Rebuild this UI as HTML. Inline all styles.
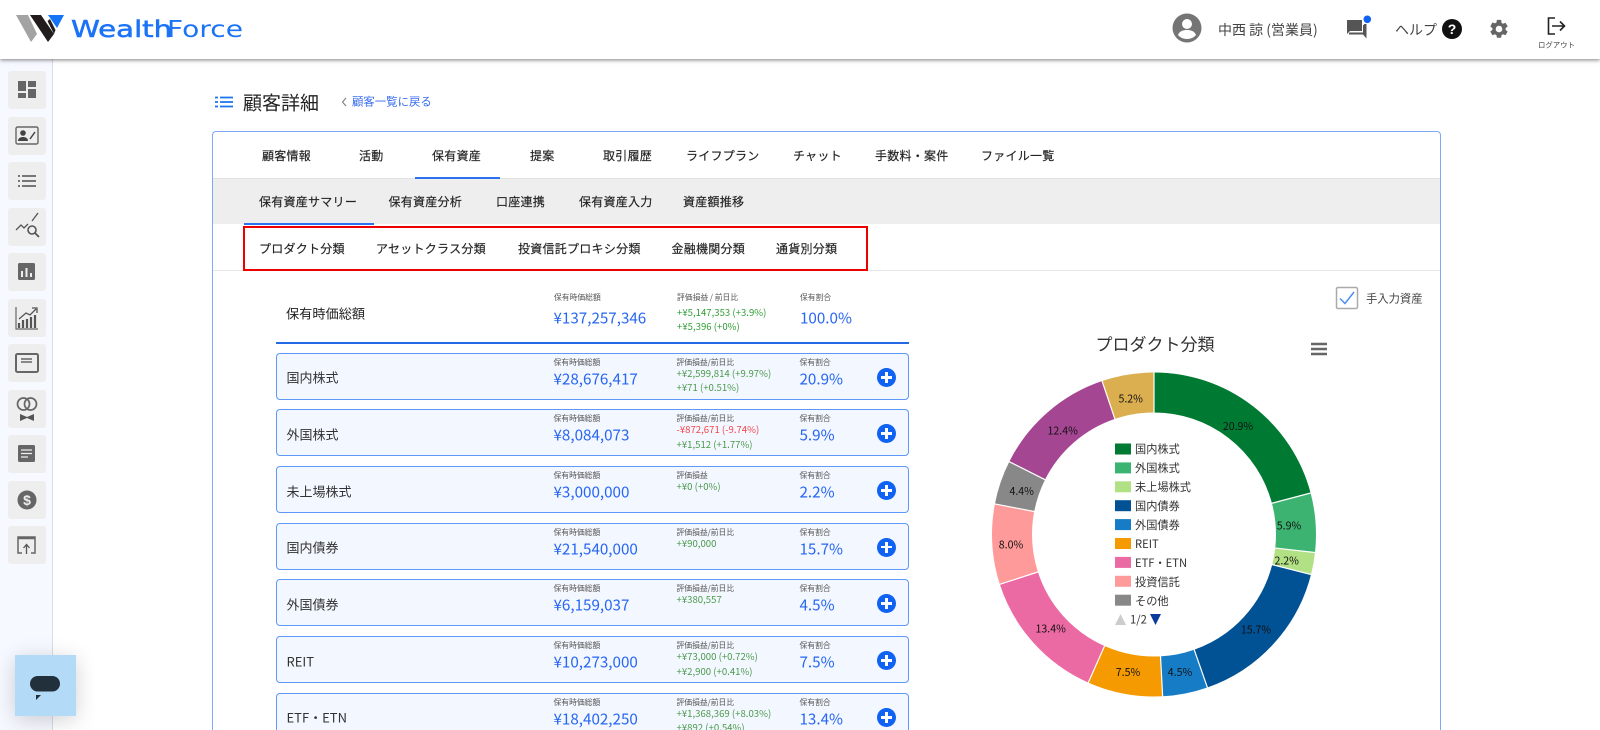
<!DOCTYPE html>
<html lang="ja"><head><meta charset="utf-8"><title>顧客詳細</title>
<style>
*{box-sizing:border-box}
html,body{margin:0;padding:0;width:1600px;height:730px;overflow:hidden;background:#fff}
#page{position:relative;width:1600px;height:730px;overflow:hidden;background:#fff;font-family:"Liberation Sans","Noto Sans CJK JP",sans-serif;color:#333;filter:blur(.35px)}
.t{position:absolute;white-space:nowrap;line-height:1;transform:translateY(-50%);font-family:"Noto Sans CJK JP",sans-serif}
#hd{position:absolute;left:0;top:0;width:1600px;height:59px;background:#fff;box-shadow:0 1px 4px rgba(0,0,0,.5);z-index:5}
#sb{position:absolute;left:0;top:59px;width:53px;height:671px;background:#f6f9ff;border-right:1px solid #d9dde4}
.tile{position:absolute;left:8px;width:38px;height:38px;background:#eeeeee;border-radius:3px}
.tile svg{position:absolute;left:0;top:0}
#chat{position:absolute;left:15px;top:655px;width:61px;height:61px;background:#b3dbf8;box-shadow:0 4px 22px rgba(0,0,0,.18)}
#box{position:absolute;left:212px;top:131px;width:1229px;height:620px;border:1px solid #7ea9f8;border-radius:4px;background:#fff}
.tab{font-size:12px;letter-spacing:.26px;color:#222;-webkit-text-stroke:.15px #222}
.card{position:absolute;left:276px;width:633px;height:47px;background:#f3f7ff;border:1.5px solid #5f98f8;border-radius:4px}
.card .n{left:9.5px;top:23.5px;font-size:13px;color:#333}
.l{font-size:7.8px;color:#555}
.card .l{top:9.2px}
.v{font-size:15.2px;color:#2766f2}
.card .v{top:25.2px}
.g{font-size:9.6px;color:#4c9a4c}
.card .g1{top:20.2px}
.card .g2{top:34.5px}
.r{color:#f4454a}
.c1{left:276.5px}.c2{left:399.5px}.c3{left:522.5px}
.p{position:absolute;left:600px;top:14px;width:19px;height:19px;border-radius:50%;background:#0f62f2}
.p:before{content:"";position:absolute;left:4px;top:8.2px;width:11px;height:2.6px;background:#fff}
.p:after{content:"";position:absolute;left:8.2px;top:4px;width:2.6px;height:11px;background:#fff}
</style></head><body>
<div id="page">

<div id="hd">
<svg width="250" height="59" style="position:absolute;left:0;top:0">
<polygon points="16,15 28,15 37,34 31,42" fill="#a3a3a3"/>
<polygon points="30,15 41,15 54,34 48,42" fill="#221c1c"/>
<polygon points="47.500,21 50,19 55.500,30 54,34" fill="#221c1c"/>
<polygon points="48,15 64,15 57,28" fill="#1673f8"/>
<text x="71" y="37" font-family="DejaVu Sans" font-size="23" fill="#1b73f6" stroke="#1b73f6" stroke-width=".5" textLength="92" lengthAdjust="spacingAndGlyphs" transform="translate(71 0) scale(1.1 1) translate(-71 0)">Wealth</text>
<text x="167" y="37" font-family="DejaVu Sans" font-size="23" fill="#1b73f6" textLength="76" lengthAdjust="spacingAndGlyphs">Force</text>
</svg>
<svg width="30" height="30" viewBox="0 0 30 30" style="position:absolute;left:1172px;top:13px"><circle cx="15" cy="15" r="14.500" fill="#757575"/><circle cx="15" cy="11" r="5" fill="#fff"/><path d="M6 22c1.500-4 5.500-5 9-5s7.500 1 9 5c-2 2.500-5.500 4-9 4s-7-1.500-9-4z" fill="#fff"/></svg>
<div class="t" style="left:1218px;top:30px;font-size:14px;color:#444">中西 諒 (営業員)</div>
<svg width="30" height="32" style="position:absolute;left:1345px;top:10px"><path d="M2 10h15v11H5l-3 3z" fill="#555"/><path d="M4 23.500h15V15" fill="none" stroke="#555" stroke-width="2"/><path d="M19 14h2.500v14.500L18 24.500z" fill="#555"/><circle cx="22.300" cy="9.300" r="3.800" fill="#0f62f2"/></svg>
<div class="t" style="left:1395px;top:30px;font-size:14px;color:#444">ヘルプ</div>
<svg width="20" height="20" style="position:absolute;left:1442px;top:19px"><circle cx="10" cy="10" r="10" fill="#111"/><text x="10" y="15" text-anchor="middle" font-family="Liberation Sans" font-weight="bold" font-size="14" fill="#fff">?</text></svg>
<svg width="22" height="22" viewBox="0 0 24 24" style="position:absolute;left:1488px;top:18px"><path fill="#666" d="M19.140 12.940c.04-.3.060-.61.060-.94s-.020-.64-.070-.94l2.030-1.580a.49.49 0 0 0 .12-.61l-1.920-3.320a.49.49 0 0 0-.59-.22l-2.390.96a7 7 0 0 0-1.620-.94l-.36-2.540A.48.48 0 0 0 13.920 2h-3.840a.47.47 0 0 0-.47.41l-.36 2.540c-.59.24-1.130.57-1.620.94l-2.390-.96a.48.48 0 0 0-.59.22L2.740 8.870a.47.47 0 0 0 .12.61l2.030 1.580c-.05.3-.090.63-.090.94s.020.64.070.94l-2.030 1.580a.49.49 0 0 0-.12.61l1.920 3.320c.12.22.37.29.59.22l2.390-.96c.5.380 1.030.7 1.620.94l.36 2.540c.05.24.24.41.48.41h3.840c.24 0 .44-.17.47-.41l.36-2.540c.59-.24 1.130-.56 1.620-.94l2.390.96c.22.080.47 0 .59-.22l1.920-3.320a.47.47 0 0 0-.12-.61zM12 15.600a3.600 3.600 0 1 1 0-7.200 3.600 3.600 0 0 1 0 7.200z"/></svg>
<svg width="22" height="22" style="position:absolute;left:1546px;top:15px"><path d="M9 3H2.500v16H9" fill="none" stroke="#222" stroke-width="1.600"/><path d="M6 11h12M14 6.500l4.500 4.500-4.500 4.500" fill="none" stroke="#222" stroke-width="1.600"/></svg>
<div class="t" style="left:1538px;top:45px;font-size:7.400px;color:#444">ログアウト</div>
</div>

<div id="sb"></div>
<div class="tile" style="top:71px"><svg width="38" height="38"><path d="M10 10h8v10h-8zM10 22h8v5h-8zM20 10h8v6h-8zM20 18h8v9h-8z" fill="#666"/></svg></div>
<div class="tile" style="top:116.500px"><svg width="38" height="38"><rect x="8" y="10" width="22" height="17" rx="1.500" fill="none" stroke="#666" stroke-width="1.400"/><circle cx="15" cy="16" r="2.800" fill="#444"/><path d="M10 24c0-3 2.500-4 5-4s5 1 5 4z" fill="#444"/><path d="M22 22l5-7" stroke="#444" stroke-width="1.500"/></svg></div>
<div class="tile" style="top:162px"><svg width="38" height="38"><path d="M14 14h14M14 19h14M14 24h14M10 14h2M10 19h2M10 24h2" stroke="#666" stroke-width="1.800"/></svg></div>
<div class="tile" style="top:207.500px"><svg width="38" height="38"><path d="M8 22l5-5 3 3 4-4M24 13l6-8" fill="none" stroke="#555" stroke-width="1.300"/><circle cx="24" cy="22" r="4" fill="none" stroke="#555" stroke-width="1.600"/><path d="M27 25l4 4" stroke="#555" stroke-width="1.800"/></svg></div>
<div class="tile" style="top:253px"><svg width="38" height="38"><rect x="10" y="10" width="17" height="17" rx="1.500" fill="#666"/><path d="M14 24v-6M18.500 24v-9M23 24v-4" stroke="#eee" stroke-width="2"/></svg></div>
<div class="tile" style="top:298.500px"><svg width="38" height="38"><path d="M8 8v22h22" fill="none" stroke="#666" stroke-width="1.200"/><path d="M11 29v-5M15 29v-8M19 29v-9M23 29v-11M27 29v-13" stroke="#555" stroke-width="2.200"/><path d="M11 20l7-6 4 2 6-6M24 9h5v5" fill="none" stroke="#555" stroke-width="1.300"/></svg></div>
<div class="tile" style="top:344px"><svg width="38" height="38"><rect x="8" y="10" width="22" height="18" rx="1.500" fill="none" stroke="#666" stroke-width="2"/><path d="M13 15h11M13 18h11" stroke="#666" stroke-width="1.500"/></svg></div>
<div class="tile" style="top:389.500px"><svg width="38" height="38"><circle cx="15.500" cy="14" r="6" fill="none" stroke="#666" stroke-width="1.700"/><circle cx="22.500" cy="14" r="6" fill="none" stroke="#666" stroke-width="1.700"/><path d="M12 24l7 3 7-3v7l-7-3-7 3z" fill="#555"/></svg></div>
<div class="tile" style="top:435px"><svg width="38" height="38"><rect x="10" y="10" width="17" height="17" rx="1.500" fill="#666"/><path d="M13 15h11M13 18.500h11M13 22h7" stroke="#eee" stroke-width="1.300"/></svg></div>
<div class="tile" style="top:480.500px"><svg width="38" height="38"><circle cx="19" cy="19" r="9.500" fill="#666"/><text x="19" y="24" text-anchor="middle" font-family="Liberation Sans" font-weight="bold" font-size="14" fill="#eee">$</text></svg></div>
<div class="tile" style="top:526px"><svg width="38" height="38"><path d="M14 27h-4V11h17v16h-4" fill="none" stroke="#666" stroke-width="1.500"/><path d="M10 12h17" stroke="#666" stroke-width="2.500"/><path d="M18.500 28v-9M15.500 22l3-3.500 3 3.500" fill="none" stroke="#555" stroke-width="1.300"/></svg></div>

<svg width="18" height="12" style="position:absolute;left:215px;top:96px"><path d="M5 1.500h13M5 6h13M5 10.500h13M0 1.500h3M0 6h3M0 10.500h3" stroke="#1a73f0" stroke-width="1.800"/></svg>
<div class="t" style="left:243px;top:102px;font-size:19px;color:#222">顧客詳細</div>
<svg width="8" height="10" style="position:absolute;left:341px;top:97px"><path d="M5 1L1.500 5 5 9" fill="none" stroke="#777" stroke-width="1"/></svg>
<div class="t" style="left:352px;top:102px;font-size:11.400px;color:#3a6ff0">顧客一覧に戻る</div>

<div id="box"></div>
<div style="position:absolute;left:213px;top:178px;width:1227px;height:46px;background:#eeeeee;border-top:1px solid #e2e2e2"></div>
<div style="position:absolute;left:213px;top:270px;width:1227px;height:1px;background:#e8e8e8"></div>
<div style="position:absolute;left:414.500px;top:176.500px;width:85px;height:2px;background:#2a72f2"></div>
<div style="position:absolute;left:243.500px;top:223px;width:130px;height:1.500px;background:#2a72f2"></div>
<div style="position:absolute;left:243px;top:225.500px;width:625px;height:45.500px;border:2px solid #ee0000"></div>

<div class="t tab" style="left:262px;top:156px">顧客情報</div>
<div class="t tab" style="left:359px;top:156px">活動</div>
<div class="t tab" style="left:432px;top:156px">保有資産</div>
<div class="t tab" style="left:530px;top:156px">提案</div>
<div class="t tab" style="left:603px;top:156px">取引履歴</div>
<div class="t tab" style="left:686px;top:156px">ライフプラン</div>
<div class="t tab" style="left:793px;top:156px">チャット</div>
<div class="t tab" style="left:875px;top:156px">手数料・案件</div>
<div class="t tab" style="left:981px;top:156px">ファイル一覧</div>

<div class="t tab" style="left:259px;top:202px">保有資産サマリー</div>
<div class="t tab" style="left:388.500px;top:202px">保有資産分析</div>
<div class="t tab" style="left:496px;top:202px">口座連携</div>
<div class="t tab" style="left:579px;top:202px">保有資産入力</div>
<div class="t tab" style="left:683px;top:202px">資産額推移</div>

<div class="t tab" style="left:259px;top:249px">プロダクト分類</div>
<div class="t tab" style="left:376px;top:249px">アセットクラス分類</div>
<div class="t tab" style="left:518px;top:249px">投資信託プロキシ分類</div>
<div class="t tab" style="left:671.500px;top:249px">金融機関分類</div>
<div class="t tab" style="left:776px;top:249px">通貨別分類</div>

<div class="t" style="left:286px;top:313px;font-size:13.200px;color:#222">保有時価総額</div>
<div class="t l" style="left:554px;top:298px">保有時価総額</div>
<div class="t v" style="left:553.500px;top:318px">¥137,257,346</div>
<div class="t l" style="left:677px;top:298px">評価損益 / 前日比</div>
<div class="t g" style="left:677px;top:312.500px;color:#2f9e36">+¥5,147,353 (+3.9%)</div>
<div class="t g" style="left:677px;top:327px;color:#2f9e36">+¥5,396 (+0%)</div>
<div class="t l" style="left:800px;top:298px">保有割合</div>
<div class="t v" style="left:800px;top:318px">100.0%</div>
<div style="position:absolute;left:276px;top:342px;width:633px;height:2px;background:#2468e6"></div>

<div class="card" style="top:352.800px"><div class="t n">国内株式</div><div class="t l c1">保有時価総額</div><div class="t v c1">¥28,676,417</div><div class="t l c2">評価損益/前日比</div><div class="t g g1 c2">+¥2,599,814 (+9.97%)</div><div class="t g g2 c2">+¥71 (+0.51%)</div><div class="t l c3">保有割合</div><div class="t v c3">20.9%</div><div class="p"></div></div>
<div class="card" style="top:409.300px"><div class="t n">外国株式</div><div class="t l c1">保有時価総額</div><div class="t v c1">¥8,084,073</div><div class="t l c2">評価損益/前日比</div><div class="t g g1 c2 r">-¥872,671 (-9.74%)</div><div class="t g g2 c2">+¥1,512 (+1.77%)</div><div class="t l c3">保有割合</div><div class="t v c3">5.9%</div><div class="p"></div></div>
<div class="card" style="top:466px"><div class="t n">未上場株式</div><div class="t l c1">保有時価総額</div><div class="t v c1">¥3,000,000</div><div class="t l c2">評価損益</div><div class="t g g1 c2">+¥0 (+0%)</div><div class="t l c3">保有割合</div><div class="t v c3">2.2%</div><div class="p"></div></div>
<div class="card" style="top:522.600px"><div class="t n">国内債券</div><div class="t l c1">保有時価総額</div><div class="t v c1">¥21,540,000</div><div class="t l c2">評価損益/前日比</div><div class="t g g1 c2">+¥90,000</div><div class="t l c3">保有割合</div><div class="t v c3">15.7%</div><div class="p"></div></div>
<div class="card" style="top:579.300px"><div class="t n">外国債券</div><div class="t l c1">保有時価総額</div><div class="t v c1">¥6,159,037</div><div class="t l c2">評価損益/前日比</div><div class="t g g1 c2">+¥380,557</div><div class="t l c3">保有割合</div><div class="t v c3">4.5%</div><div class="p"></div></div>
<div class="card" style="top:636px"><div class="t n">REIT</div><div class="t l c1">保有時価総額</div><div class="t v c1">¥10,273,000</div><div class="t l c2">評価損益/前日比</div><div class="t g g1 c2">+¥73,000 (+0.72%)</div><div class="t g g2 c2">+¥2,900 (+0.41%)</div><div class="t l c3">保有割合</div><div class="t v c3">7.5%</div><div class="p"></div></div>
<div class="card" style="top:692.800px"><div class="t n">ETF・ETN</div><div class="t l c1">保有時価総額</div><div class="t v c1">¥18,402,250</div><div class="t l c2">評価損益/前日比</div><div class="t g g1 c2">+¥1,368,369 (+8.03%)</div><div class="t g g2 c2">+¥892 (+0.54%)</div><div class="t l c3">保有割合</div><div class="t v c3">13.4%</div><div class="p"></div></div>

<svg width="24" height="24" style="position:absolute;left:1335px;top:286px"><rect x="1.500" y="1.500" width="21" height="21" rx="1.500" fill="#fff" stroke="#aaa" stroke-width="1.500"/><path d="M5 12.500l5 5L19 6" fill="none" stroke="#4d8df5" stroke-width="1.500"/></svg>
<div class="t" style="left:1366px;top:299px;font-size:11.300px;color:#444">手入力資産</div>

<svg width="1600" height="730" style="position:absolute;left:0;top:0;pointer-events:none">
<g transform="translate(1154 534.500) rotate(-90)" fill="none" stroke-width="40">
<circle r="142" pathLength="100.100" stroke="#007a33" stroke-dasharray="20.900 100.100"/>
<circle r="142" pathLength="100.100" stroke="#3cb371" stroke-dasharray="5.900 100.100" stroke-dashoffset="-20.900"/>
<circle r="142" pathLength="100.100" stroke="#b2e085" stroke-dasharray="2.200 100.100" stroke-dashoffset="-26.800"/>
<circle r="142" pathLength="100.100" stroke="#005295" stroke-dasharray="15.700 100.100" stroke-dashoffset="-29"/>
<circle r="142" pathLength="100.100" stroke="#167cc6" stroke-dasharray="4.500 100.100" stroke-dashoffset="-44.700"/>
<circle r="142" pathLength="100.100" stroke="#f59a00" stroke-dasharray="7.500 100.100" stroke-dashoffset="-49.200"/>
<circle r="142" pathLength="100.100" stroke="#ec6aa4" stroke-dasharray="13.400 100.100" stroke-dashoffset="-56.700"/>
<circle r="142" pathLength="100.100" stroke="#ff9a9a" stroke-dasharray="8 100.100" stroke-dashoffset="-70.100"/>
<circle r="142" pathLength="100.100" stroke="#888888" stroke-dasharray="4.400 100.100" stroke-dashoffset="-78.100"/>
<circle r="142" pathLength="100.100" stroke="#a54692" stroke-dasharray="12.400 100.100" stroke-dashoffset="-82.500"/>
<circle r="142" pathLength="100.100" stroke="#dbae50" stroke-dasharray="5.200 100.100" stroke-dashoffset="-94.900"/>
</g>
<g transform="translate(1154 534.500)" stroke="#fff" stroke-width="1.200">
<line y1="-120" y2="-164"/>
<line y1="-120" y2="-164" transform="rotate(75.160)"/>
<line y1="-120" y2="-164" transform="rotate(96.380)"/>
<line y1="-120" y2="-164" transform="rotate(104.300)"/>
<line y1="-120" y2="-164" transform="rotate(160.760)"/>
<line y1="-120" y2="-164" transform="rotate(176.940)"/>
<line y1="-120" y2="-164" transform="rotate(203.920)"/>
<line y1="-120" y2="-164" transform="rotate(252.100)"/>
<line y1="-120" y2="-164" transform="rotate(280.880)"/>
<line y1="-120" y2="-164" transform="rotate(296.700)"/>
<line y1="-120" y2="-164" transform="rotate(341.300)"/>
</g>
<g font-family="Noto Sans CJK JP" font-size="10.600" fill="#111" text-anchor="middle" dominant-baseline="central">
<text x="1238" y="426.500">20.9%</text><text x="1289" y="526">5.9%</text><text x="1286.700" y="561">2.2%</text><text x="1256" y="630">15.7%</text><text x="1180" y="672.700">4.5%</text><text x="1128" y="672.700">7.5%</text><text x="1050.700" y="629">13.4%</text><text x="1011" y="545">8.0%</text><text x="1021.700" y="491.700">4.4%</text><text x="1062.700" y="431">12.4%</text><text x="1130.700" y="399">5.2%</text>
</g>
<text x="1155" y="343" text-anchor="middle" dominant-baseline="central" font-family="Noto Sans CJK JP" font-size="17" fill="#333">プロダクト分類</text>
<path d="M1311 344h16M1311 349h16M1311 354h16" stroke="#666" stroke-width="2.600"/>
<g>
<rect x="1115" y="443.500" width="16" height="11" fill="#007a33"/>
<rect x="1115" y="462.400" width="16" height="11" fill="#3cb371"/>
<rect x="1115" y="481.300" width="16" height="11" fill="#b2e085"/>
<rect x="1115" y="500.200" width="16" height="11" fill="#005295"/>
<rect x="1115" y="519.100" width="16" height="11" fill="#167cc6"/>
<rect x="1115" y="538" width="16" height="11" fill="#f59a00"/>
<rect x="1115" y="556.900" width="16" height="11" fill="#ec6aa4"/>
<rect x="1115" y="575.800" width="16" height="11" fill="#ff9a9a"/>
<rect x="1115" y="594.700" width="16" height="11" fill="#888888"/>
</g>
<g font-family="Noto Sans CJK JP" font-size="11.200" fill="#333" dominant-baseline="central">
<text x="1135" y="449">国内株式</text><text x="1135" y="468">外国株式</text><text x="1135" y="487">未上場株式</text><text x="1135" y="506">国内債券</text><text x="1135" y="525">外国債券</text><text x="1135" y="544">REIT</text><text x="1135" y="563">ETF・ETN</text><text x="1135" y="582">投資信託</text><text x="1135" y="601">その他</text>
<text x="1130" y="619.500">1/2</text>
</g>
<polygon points="1115,625 1126,625 1120.500,614" fill="#cccccc"/>
<polygon points="1150,614 1161,614 1155.500,625" fill="#0a3a9c"/>
</svg>

<div id="chat"><svg width="61" height="61"><rect x="15" y="21" width="30" height="15.500" rx="7.700" fill="#22303c"/><polygon points="21,40 26,40 21,45" fill="#22303c"/></svg></div>
</div>
</body></html>
